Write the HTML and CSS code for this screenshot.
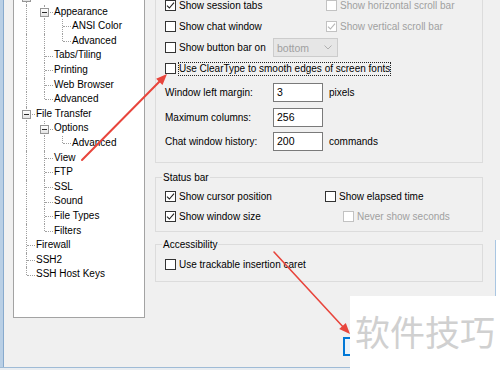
FILE: index.html
```html
<!DOCTYPE html>
<html>
<head>
<meta charset="utf-8">
<link rel="stylesheet" href="styles.css">
</head>
<body>
<div class="screen">
  <div class="frame">
    <div class="edge-left"></div>
    <div class="dialog">
      <div class="panes">
        <div class="tree">
          <div class="node"><span class="g tee"><span class="exp"></span></span></div>
          <div class="node"><span class="g pipe"></span><span class="g tee"><span class="exp"></span></span><span class="t">Appearance</span></div>
          <div class="node"><span class="g pipe"></span><span class="g pipe"></span><span class="g tee"></span><span class="t">ANSI Color</span></div>
          <div class="node"><span class="g pipe"></span><span class="g pipe"></span><span class="g elbow"></span><span class="t">Advanced</span></div>
          <div class="node"><span class="g pipe"></span><span class="g tee"></span><span class="t">Tabs/Tiling</span></div>
          <div class="node"><span class="g pipe"></span><span class="g tee"></span><span class="t">Printing</span></div>
          <div class="node"><span class="g pipe"></span><span class="g tee"></span><span class="t">Web Browser</span></div>
          <div class="node"><span class="g pipe"></span><span class="g elbow"></span><span class="t">Advanced</span></div>
          <div class="node"><span class="g tee"><span class="exp"></span></span><span class="t">File Transfer</span></div>
          <div class="node"><span class="g pipe"></span><span class="g tee"><span class="exp"></span></span><span class="t">Options</span></div>
          <div class="node"><span class="g pipe"></span><span class="g pipe"></span><span class="g elbow"></span><span class="t">Advanced</span></div>
          <div class="node"><span class="g pipe"></span><span class="g tee"></span><span class="t">View</span></div>
          <div class="node"><span class="g pipe"></span><span class="g tee"></span><span class="t">FTP</span></div>
          <div class="node"><span class="g pipe"></span><span class="g tee"></span><span class="t">SSL</span></div>
          <div class="node"><span class="g pipe"></span><span class="g tee"></span><span class="t">Sound</span></div>
          <div class="node"><span class="g pipe"></span><span class="g tee"></span><span class="t">File Types</span></div>
          <div class="node"><span class="g pipe"></span><span class="g elbow"></span><span class="t">Filters</span></div>
          <div class="node"><span class="g tee"></span><span class="t">Firewall</span></div>
          <div class="node"><span class="g tee"></span><span class="t">SSH2</span></div>
          <div class="node"><span class="g elbow"></span><span class="t">SSH Host Keys</span></div>
        </div>

        <div class="right">
          <div class="group group-top">
            <div class="row">
              <div class="cb-item c1"><span class="cb"><svg class="ck" viewBox="0 0 9 9" width="9" height="9"><path d="M1 4.6 L3.4 7 L8 1.6"/></svg></span><span>Show session tabs</span></div>
              <div class="cb-item disabled"><span class="cb"></span><span>Show horizontal scroll bar</span></div>
            </div>
            <div class="row">
              <div class="cb-item c1"><span class="cb"></span><span>Show chat window</span></div>
              <div class="cb-item disabled"><span class="cb"><svg class="ck" viewBox="0 0 9 9" width="9" height="9"><path d="M1 4.6 L3.4 7 L8 1.6"/></svg></span><span>Show vertical scroll bar</span></div>
            </div>
            <div class="row">
              <div class="cb-item c-field"><span class="cb"></span><span>Show button bar on</span></div>
              <div class="select"><span>bottom</span><svg class="chev" viewBox="0 0 8 5" width="8" height="5"><path d="M0.5 0.5 L4 4 L7.5 0.5"/></svg></div>
            </div>
            <div class="row">
              <div class="cb-item"><span class="cb"></span><span class="focus">Use ClearType to smooth edges of screen fonts</span></div>
            </div>
            <div class="field first">
              <span class="flabel">Window left margin:</span>
              <span class="input">3</span>
              <span class="unit">pixels</span>
            </div>
            <div class="field">
              <span class="flabel">Maximum columns:</span>
              <span class="input">256</span>
            </div>
            <div class="field">
              <span class="flabel">Chat window history:</span>
              <span class="input">200</span>
              <span class="unit">commands</span>
            </div>
          </div>

          <div class="group group-status">
            <div class="legend">Status bar</div>
            <div class="row row-s first">
              <div class="cb-item c1 c1s"><span class="cb"><svg class="ck" viewBox="0 0 9 9" width="9" height="9"><path d="M1 4.6 L3.4 7 L8 1.6"/></svg></span><span>Show cursor position</span></div>
              <div class="cb-item"><span class="cb"></span><span>Show elapsed time</span></div>
            </div>
            <div class="row row-s">
              <div class="cb-item c1 c1s"><span class="cb"><svg class="ck" viewBox="0 0 9 9" width="9" height="9"><path d="M1 4.6 L3.4 7 L8 1.6"/></svg></span><span>Show window size</span></div>
              <div class="cb-item disabled sub"><span class="cb"></span><span>Never show seconds</span></div>
            </div>
          </div>

          <div class="group group-access">
            <div class="legend">Accessibility</div>
            <div class="row row-s first">
              <div class="cb-item"><span class="cb"></span><span>Use trackable insertion caret</span></div>
            </div>
          </div>
        </div>
      </div>

      <div class="buttons">
        <button class="btn default" aria-label="OK"></button>
      </div>
    </div>
    <div class="edge-right"><div class="er-top"></div><div class="er-bottom"></div></div>
  </div>
  <div class="edge-bottom"></div>

  <svg class="arrows" viewBox="0 0 500 370" width="500" height="370">
    <line x1="82" y1="160" x2="161" y2="80" class="a1"/>
    <polygon points="167,74 162.5,85 156.1,78.7" class="head"/>
    <line x1="274" y1="252" x2="345" y2="329" class="a2"/>
    <polygon points="350,334 339.2,329 345.8,322.9" class="head"/>
  </svg>

  <div class="watermark">软件技巧</div>
</div>
</body>
</html>
```

FILE: styles.css
```css
* { box-sizing: border-box; }

html, body {
  margin: 0;
  padding: 0;
  background: #f0f0f0;
}

.screen {
  position: relative;
  width: 500px;
  height: 370px;
  overflow: hidden;
  display: flex;
  flex-direction: column;
  background: #f0f0f0;
  font-family: "Liberation Sans", Arial, sans-serif;
  font-size: 10px;
  color: #000;
}

.frame {
  flex: 1;
  min-height: 0;
  display: flex;
}

.edge-left {
  width: 4px;
  flex: none;
  background: linear-gradient(to right, #b9cfe5 0 3px, #88aacd 3px 4px);
}

.dialog {
  flex: 1;
  min-width: 0;
  display: flex;
  flex-direction: column;
  overflow: hidden;
}

.panes {
  display: flex;
  align-items: flex-start;
}

/* ---------- tree ---------- */
.tree {
  flex: none;
  margin-left: 9px;
  margin-top: -10px;
  width: 132px;
  height: 328px;
  background: #fff;
  border: 1px solid #a3a3a3;
  border-top: none;
  padding-left: 3px;
}

.node {
  display: flex;
  height: 14.6px;
  white-space: nowrap;
}

.g {
  position: relative;
  flex: none;
  width: 18px;
}

.g.pipe::before,
.g.tee::before,
.g.elbow::before {
  content: "";
  position: absolute;
  left: 9px;
  top: 0;
  bottom: 0;
  border-left: 1px dotted #a0a0a0;
}

.g.elbow::before {
  bottom: 50%;
}

.g.tee::after,
.g.elbow::after {
  content: "";
  position: absolute;
  left: 10px;
  right: 0;
  top: 50%;
  border-top: 1px dotted #a0a0a0;
}

.exp {
  position: absolute;
  z-index: 1;
  left: 5px;
  top: calc(50% - 4px);
  width: 9px;
  height: 9px;
  border: 1px solid #969696;
  background: linear-gradient(#ffffff, #e4e4e4);
}

.exp::after {
  content: "";
  position: absolute;
  left: 1px;
  top: 3px;
  width: 5px;
  height: 1px;
  background: #2a2a2a;
}

.t {
  padding-left: 1px;
  line-height: 14.6px;
}

/* ---------- right side ---------- */
.right {
  flex: none;
  margin-left: 10px;
  width: 328px;
  display: flex;
  flex-direction: column;
}

.group {
  border: 1px solid #dcdcdc;
  display: flex;
  flex-direction: column;
  padding-left: 9px;
}

.group-top {
  margin-top: -6px;
  padding-bottom: 11px;
}

.group-status {
  margin-top: 14px;
  padding-bottom: 5px;
}

.group-access {
  margin-top: 12px;
  padding-bottom: 7px;
}

.legend {
  align-self: flex-start;
  margin-left: -3px;
  padding: 0 1px;
  height: 12px;
  line-height: 12px;
  background: #f0f0f0;
  margin-top: -6.5px;
}

.group-access .legend {
  margin-top: -6px;
}

.row {
  display: flex;
  align-items: center;
  height: 21px;
  white-space: nowrap;
}

.row-s {
  height: 20px;
}

.group-status .row-s.first {
  margin-top: 2.5px;
}

.group-access .row-s.first {
  margin-top: 3px;
}

.cb-item {
  display: flex;
  align-items: center;
  gap: 3px;
}

.c1 {
  width: 161px;
}

.c1s {
  width: 160px;
}

.c-field {
  width: 108px;
}

.sub {
  margin-left: 18px;
}

.cb {
  flex: none;
  width: 11px;
  height: 11px;
  border: 1px solid #333;
  background: #fff;
  display: flex;
  color: #1e1e1e;
}

.ck {
  display: block;
}

.ck path {
  fill: none;
  stroke: currentColor;
  stroke-width: 1.1;
}

.disabled {
  color: #a0a0a0;
}

.disabled .cb {
  border-color: #c2c2c2;
  color: #b5b5b5;
}

.focus {
  margin-left: -1px;
  padding: 0;
  height: 14px;
  line-height: 12px;
  border: 1px dotted #222;
}

.select {
  width: 65px;
  height: 19px;
  border: 1px solid #cccccc;
  background: #e6e6e6;
  color: #a0a0a0;
  display: flex;
  align-items: center;
  justify-content: space-between;
  padding: 0 5px 0 3px;
  font-size: 10.5px;
}

.chev path {
  fill: none;
  stroke: #b0b0b0;
  stroke-width: 1;
}

.field {
  display: flex;
  align-items: center;
  height: 19px;
  margin-top: 5.5px;
  white-space: nowrap;
}

.field.first {
  margin-top: 4px;
}

.flabel {
  width: 108px;
}

.input {
  width: 50px;
  height: 19px;
  border: 1px solid #7a7a7a;
  background: #fff;
  padding-left: 3px;
  line-height: 17px;
  font-size: 10.5px;
}

.unit {
  margin-left: 6px;
}

/* ---------- buttons ---------- */
.buttons {
  display: flex;
  gap: 8px;
  padding-left: 339px;
  margin-top: 19px;
}

.btn {
  flex: none;
  width: 75px;
  height: 19px;
  border: 1px solid #adadad;
  background: #e1e1e1;
  font-family: inherit;
  font-size: 10px;
  padding: 0;
}

.btn.default {
  border-color: #0078d7;
  box-shadow: inset 0 0 0 1px #0078d7;
  background: #eaf3fb;
}

/* ---------- surrounding windows ---------- */
.edge-right {
  width: 5px;
  flex: none;
  display: flex;
  flex-direction: column;
}

.er-top {
  height: 240px;
}

.er-bottom {
  flex: 1;
  background: #fff;
  border-left: 1px solid #a9c6e2;
}

.edge-bottom {
  height: 3px;
  flex: none;
  background: linear-gradient(#9fbbd6 0 1px, #e9edf1 1px);
}

/* ---------- overlays ---------- */
.arrows {
  position: absolute;
  left: 0;
  top: 0;
  pointer-events: none;
}

.arrows line {
  stroke: #e8453c;
  stroke-linecap: round;
}

.arrows .a1 {
  stroke-width: 2;
}

.arrows .a2 {
  stroke-width: 1.6;
}

.arrows .head {
  fill: #e8453c;
}

.watermark {
  position: absolute;
  left: 350px;
  top: 296px;
  width: 150px;
  height: 74px;
  background: #fff;
  display: flex;
  align-items: center;
  padding-left: 5px;
  padding-bottom: 6px;
  font-family: "Noto Sans CJK SC", sans-serif;
  font-size: 35px;
  line-height: 1;
  color: #d0d0d0;
  white-space: nowrap;
}
```
